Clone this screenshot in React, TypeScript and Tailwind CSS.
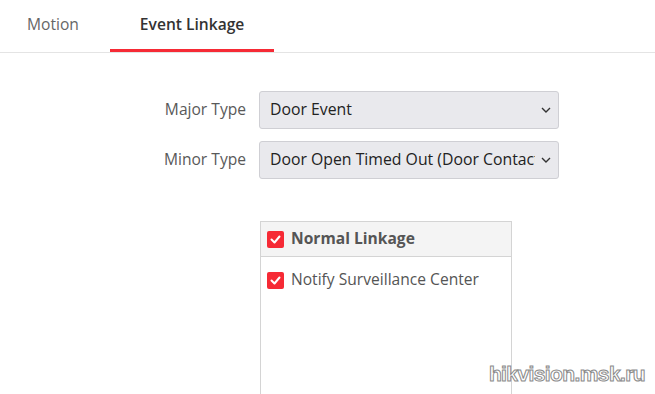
import { useState } from 'react';

const tabs = ['Motion', 'Event Linkage'];

function Chevron() {
  return (
    <svg width="10" height="6" viewBox="0 0 10 6" className="shrink-0">
      <path d="M1 1l4 4 4-4" fill="none" stroke="#333" strokeWidth="1.4" />
    </svg>
  );
}

function Check({ checked }: { checked: boolean }) {
  return (
    <span
      className={`flex h-[17px] w-[17px] shrink-0 items-center justify-center rounded-[2px] ${
        checked ? 'bg-[#f62a35]' : 'border border-[#bbb] bg-white'
      }`}
    >
      {checked && (
        <svg width="11" height="9" viewBox="0 0 11 9">
          <path d="M1.5 4.5l3 3 5-6" fill="none" stroke="#fff" strokeWidth="2" strokeLinecap="round" strokeLinejoin="round" />
        </svg>
      )}
    </span>
  );
}

function Field({ label, value }: { label: string; value: string }) {
  return (
    <>
      <div className="text-right text-[15.6px] text-[#595959]">{label}</div>
      <div className="flex h-[38px] w-[300px] items-center gap-[6px] rounded-[3px] border border-[#cfcfd4] bg-[#e9e9ed] pl-[10px] pr-[7px] text-[15.8px] text-[#222]">
        <span className="min-w-0 flex-1 overflow-hidden whitespace-nowrap">{value}</span>
        <Chevron />
      </div>
    </>
  );
}

export default function App() {
  const [active, setActive] = useState(1);
  const [normal, setNormal] = useState(true);
  const [notify, setNotify] = useState(true);

  return (
    <div className="relative h-[394px] w-[655px] overflow-hidden bg-white font-['Open_Sans',sans-serif]">
      <div className="flex h-[53px] border-b border-[#e4e4e4]">
        {tabs.map((t, i) => (
          <button
            key={t}
            onClick={() => setActive(i)}
            className={`flex h-full items-center border-b-[3px] text-[15.6px] ${
              i === 0 ? 'pl-[27px] pr-[31px]' : 'px-[30px]'
            } ${active === i ? 'border-[#f62a35] font-semibold text-[#333]' : 'border-transparent text-[#666]'}`}
          >
            {t}
          </button>
        ))}
      </div>

      <div className="mt-[38px] grid grid-cols-[246px_300px] items-center gap-x-[13px] gap-y-[12px]">
        <Field label="Major Type" value="Door Event" />
        <Field label="Minor Type" value="Door Open Timed Out (Door Contact Open Timeout)" />
      </div>

      <div className="ml-[260px] mt-[42px] h-[220px] w-[252px] border border-[#d4d4d4]">
        <button
          onClick={() => setNormal(!normal)}
          className="flex h-[35px] w-full items-center gap-[7px] border-b border-[#d4d4d4] bg-[#f4f4f4] pl-[6px] text-[15.6px] font-bold text-[#555]"
        >
          <Check checked={normal} />
          Normal Linkage
        </button>
        <button
          onClick={() => setNotify(!notify)}
          className="mt-[6px] flex h-[34px] w-full items-center gap-[7px] pl-[6px] text-[15.6px] text-[#555]"
        >
          <Check checked={notify} />
          Notify Surveillance Center
        </button>
      </div>

      <div className="absolute bottom-[5px] right-[10px] font-['Liberation_Sans',sans-serif] text-[21px] font-bold tracking-[-0.6px] text-white [-webkit-text-stroke:1px_#8a8a8a]">
        hikvision.msk.ru
      </div>
    </div>
  );
}
